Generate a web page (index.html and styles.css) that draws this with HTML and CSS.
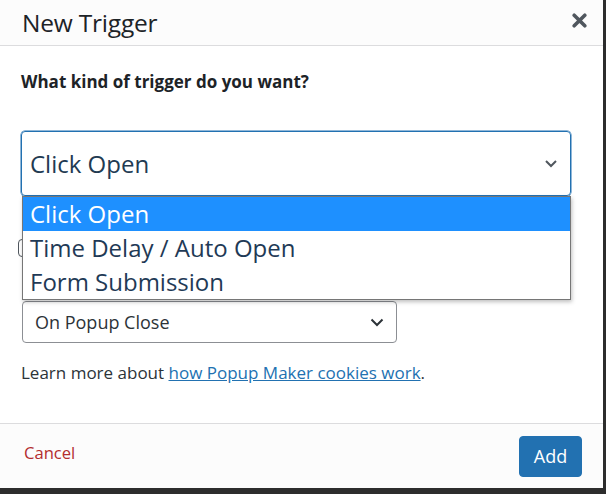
FILE: index.html
```html
<!DOCTYPE html>
<html>
<head>
<meta charset="utf-8">
<link rel="stylesheet" href="styles.css">
</head>
<body>
<div class="modal">
  <header class="modal-header">
    <h1 class="title">New Trigger</h1>
    <button class="close" aria-label="Close">
      <svg width="15" height="15" viewBox="0 0 15 15"><path d="M2.2 2.2 L12.8 12.8 M12.8 2.2 L2.2 12.8" stroke="#50575e" stroke-width="3.6" stroke-linecap="round"/></svg>
    </button>
  </header>
  <main class="modal-body">
    <p class="question">What kind of trigger do you want?</p>
    <div class="select-wrap">
      <div class="select-big">
        <span>Click Open</span>
        <svg class="chev" width="14" height="9" viewBox="0 0 14 9"><path d="M2 2 L7 7 L12 2" fill="none" stroke="#50575e" stroke-width="2"/></svg>
      </div>
      <ul class="dropdown">
        <li class="opt active">Click Open</li>
        <li class="opt">Time Delay / Auto Open</li>
        <li class="opt">Form Submission</li>
      </ul>
    </div>
    <div class="hidden-row">
      <span class="checkbox"></span>
    </div>
    <div class="select-small">
      <span>On Popup Close</span>
      <svg class="chev" width="14" height="9" viewBox="0 0 14 9"><path d="M1.5 1.5 L7 7 L12.5 1.5" fill="none" stroke="#2c3338" stroke-width="2"/></svg>
    </div>
    <p class="learn">Learn more about <a href="#">how Popup Maker cookies work</a>.</p>
  </main>
  <footer class="modal-footer">
    <a class="cancel" href="#">Cancel</a>
    <button class="add">Add</button>
  </footer>
</div>
</body>
</html>
```

FILE: styles.css
```css
html, body {
  margin: 0;
  padding: 0;
}
body {
  background: #2d2d2d;
  font-family: "Open Sans", "Noto Sans", sans-serif;
  width: 606px;
  height: 494px;
  overflow: hidden;
}
.modal {
  width: 603px;
  height: 488px;
  background: #fff;
  display: flex;
  flex-direction: column;
}
.modal-header {
  height: 45px;
  border-bottom: 1px solid #dcdcde;
  background: #fcfcfc;
  display: flex;
  align-items: center;
  justify-content: space-between;
  padding: 0 16px 0 22px;
}
.title {
  margin: 0;
  font-size: 24.5px;
  font-weight: 400;
  color: #1d2327;
  letter-spacing: -0.2px;
  margin-top: -1px;
}
.close {
  border: 0;
  background: none;
  padding: 0;
  width: 15px;
  height: 15px;
  display: flex;
  margin-top: -4px;
}
.modal-body {
  flex: 1;
  padding: 0 22px 0 21px;
  position: relative;
}
.question {
  margin: 25px 0 0;
  font-size: 17px;
  font-weight: 700;
  color: #1d2327;
  line-height: 22px;
}
.select-wrap {
  position: relative;
  margin-top: 38px;
  width: 550px;
}
.select-big {
  box-sizing: border-box;
  height: 65px;
  border: 1px solid #2271b1;
  border-radius: 4px;
  box-shadow: 0 0 0 0.5px #2271b1;
  display: flex;
  align-items: center;
  justify-content: space-between;
  padding: 0 12px 0 8px;
  font-size: 24px;
  color: #223a52;
}
.dropdown {
  position: absolute;
  left: 1px;
  top: 65px;
  width: 549px;
  box-sizing: border-box;
  margin: 0;
  padding: 0;
  list-style: none;
  background: #fff;
  border: 1px solid #767676;
  box-shadow: 1px 2px 4px rgba(0,0,0,0.25);
  z-index: 2;
}
.opt {
  height: 34px;
  line-height: 34px;
  font-size: 24px;
  color: #1f3a56;
  padding-left: 7px;
}
.opt.active {
  background: #1e90ff;
  color: #fff;
}
.hidden-row {
  display: flex;
  align-items: center;
  height: 40px;
  margin-top: 32px;
  margin-left: -3px;
}
.checkbox {
  width: 16px;
  height: 16px;
  border: 1px solid #50575e;
  border-radius: 4px;
}
.select-small {
  box-sizing: border-box;
  margin-top: 33px;
  width: 375px;
  height: 42px;
  margin-left: 1px;
  border: 1px solid #8c8f94;
  border-radius: 4px;
  display: flex;
  align-items: center;
  justify-content: space-between;
  padding: 0 12px 0 12px;
  font-size: 18px;
  color: #2c3338;
}
.learn {
  margin: 18px 0 0;
  font-size: 17px;
  color: #2c3338;
  line-height: 24px;
}
.learn a {
  color: #2271b1;
}
.modal-footer {
  height: 64px;
  border-top: 1px solid #dcdcde;
  background: #fcfcfc;
  display: flex;
  align-items: center;
  justify-content: space-between;
  padding: 0 21px 0 24px;
}
.cancel {
  color: #b32d2e;
  font-size: 16.6px;
  text-decoration: none;
  margin-top: -8px;
}
.add {
  background: #2271b1;
  border: 1px solid #2271b1;
  border-radius: 4px;
  color: #fff;
  font-family: inherit;
  font-size: 18px;
  width: 63px;
  height: 41px;
  padding: 0;
}
```
